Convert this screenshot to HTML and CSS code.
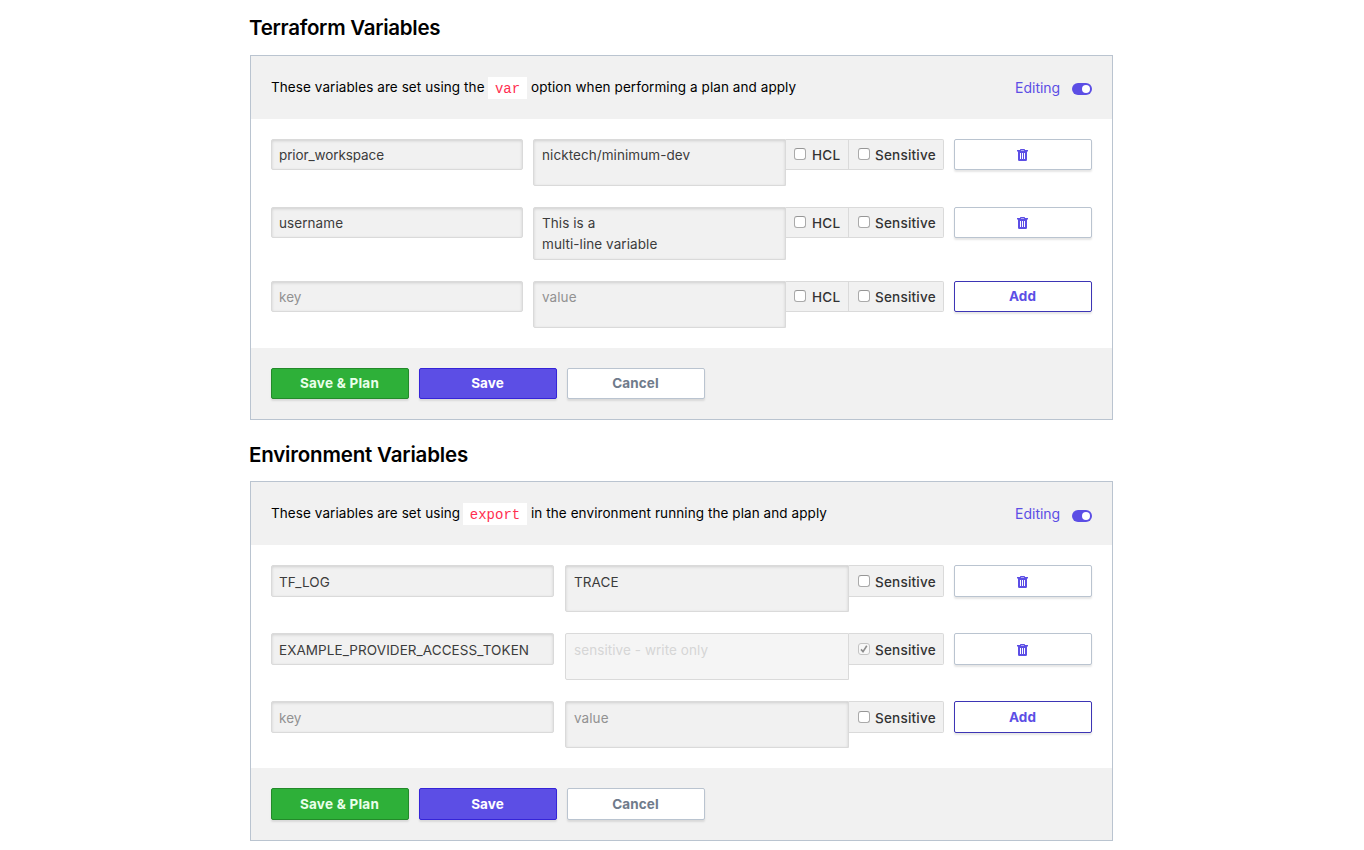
FILE: index.html
```
<!DOCTYPE html>
<html lang="en">
<head>
<meta charset="utf-8">
<title>Variables</title>
<link rel="stylesheet" href="styles.css">
</head>
<body>
<svg class="sprite" width="0" height="0" aria-hidden="true">
  <symbol id="trash" viewBox="0 0 11 12">
    <path fill="currentColor" fill-rule="evenodd" d="M3 1V.8Q3 0 3.8 0H7.2Q8 0 8 .8V1H11V2.5H10V10.8Q10 12 8.8 12H2.2Q1 12 1 10.8V2.5H0V1ZM4 1.5H7V.9H4ZM3 4V10H4V4ZM5 4V10H6V4ZM7 4V10H8V4Z"/>
  </symbol>
</svg>
<main class="page">
  <h2 class="title title-terraform">Terraform Variables</h2>
  <section class="panel">
    <header class="panel-head">
      <p class="intro"><span class="t-using-the">These variables are set using the</span><code class="code-var">var</code><span class="t-option">option when performing a plan and apply</span></p>
      <div class="mode"><span class="mode-label">Editing</span><span class="toggle"></span></div>
    </header>
    <div class="rows">
      <div class="row">
        <input class="field field-snake" type="text" value="prior_workspace">
        <textarea class="field area">nicktech/minimum-dev</textarea>
        <label class="option hcl"><input class="check" type="checkbox"><span>HCL</span></label>
        <label class="option sensitive"><input class="check" type="checkbox"><span>Sensitive</span></label>
        <button class="btn btn-plain"><svg class="icon"><use href="#trash"/></svg></button>
      </div>
      <div class="row">
        <input class="field" type="text" value="username">
        <textarea class="field area area-tall">This is a
multi-line variable</textarea>
        <label class="option hcl"><input class="check" type="checkbox"><span>HCL</span></label>
        <label class="option sensitive"><input class="check" type="checkbox"><span>Sensitive</span></label>
        <button class="btn btn-plain"><svg class="icon"><use href="#trash"/></svg></button>
      </div>
      <div class="row">
        <input class="field" type="text" placeholder="key">
        <textarea class="field area" placeholder="value"></textarea>
        <label class="option hcl"><input class="check" type="checkbox"><span>HCL</span></label>
        <label class="option sensitive"><input class="check" type="checkbox"><span>Sensitive</span></label>
        <button class="btn btn-add">Add</button>
      </div>
    </div>
    <footer class="panel-foot">
      <button class="btn btn-plan">Save &amp; Plan</button>
      <button class="btn btn-save">Save</button>
      <button class="btn btn-plain">Cancel</button>
    </footer>
  </section>

  <h2 class="title title-environment">Environment Variables</h2>
  <section class="panel panel-env">
    <header class="panel-head">
      <p class="intro"><span class="t-using">These variables are set using</span><code class="code-export">export</code><span class="t-env">in the environment running the plan and apply</span></p>
      <div class="mode"><span class="mode-label">Editing</span><span class="toggle"></span></div>
    </header>
    <div class="rows">
      <div class="row">
        <input class="field" type="text" value="TF_LOG">
        <textarea class="field area">TRACE</textarea>
        <label class="option sensitive"><input class="check" type="checkbox"><span>Sensitive</span></label>
        <button class="btn btn-plain"><svg class="icon"><use href="#trash"/></svg></button>
      </div>
      <div class="row">
        <input class="field" type="text" value="EXAMPLE_PROVIDER_ACCESS_TOKEN">
        <textarea class="field area area-off" placeholder="sensitive - write only" disabled></textarea>
        <label class="option sensitive"><span class="check check-on"><svg viewBox="0 0 12 12"><path d="M3 6.4L5 8.6L8.8 2.8" fill="none" stroke="#8d8d8d" stroke-width="1.6"/></svg></span><span>Sensitive</span></label>
        <button class="btn btn-plain"><svg class="icon"><use href="#trash"/></svg></button>
      </div>
      <div class="row">
        <input class="field" type="text" placeholder="key">
        <textarea class="field area" placeholder="value"></textarea>
        <label class="option sensitive"><input class="check" type="checkbox"><span>Sensitive</span></label>
        <button class="btn btn-add">Add</button>
      </div>
    </div>
    <footer class="panel-foot">
      <button class="btn btn-plan">Save &amp; Plan</button>
      <button class="btn btn-save">Save</button>
      <button class="btn btn-plain">Cancel</button>
    </footer>
  </section>
</main>
</body>
</html>
```
FILE: styles.css
```
* { box-sizing: border-box; }
body {
  margin: 0;
  background: #fff;
  color: #000;
  font: 13.5px/21px Inter, "Liberation Sans", sans-serif;
}
.sprite { display: block; }
.page { width: 863px; margin-left: 250px; }
.title {
  margin: 0 0 0 -1px;
  height: 55px;
  padding-top: 14px;
  font-size: 20.5px;
  line-height: 28px;
  font-weight: 600;
  letter-spacing: -0.28px;
  white-space: nowrap;
}
.title-environment { height: 61px; padding-top: 21px; letter-spacing: -0.18px; }
.panel { --control: 31px; border: 1px solid #bac4d0; }
.panel-env { --control: 32px; }
.panel-head {
  display: flex;
  justify-content: space-between;
  height: 63px;
  padding: 20px 20px 0;
  background: #f1f1f1;
}
.intro { display: flex; margin: 0; white-space: nowrap; line-height: 23px; letter-spacing: 0.08px; }
.intro code {
  height: 22px;
  margin: 1px 4px 0;
  background: #fff;
  color: #ff2e50;
  font: 14px/24px "Liberation Mono", monospace;
  letter-spacing: 0;
  text-align: center;
}
.code-var { width: 39px; }
.code-export { width: 64px; }
.t-using-the { width: 213px; }
.t-using { width: 188px; }
.mode { display: flex; gap: 12px; color: #5c4ee5; line-height: 24px; }
.mode-label { width: 45px; font-size: 14px; }
.toggle {
  display: flex;
  justify-content: flex-end;
  width: 20px;
  height: 12px;
  margin-top: 7px;
  padding: 2px;
  border-radius: 6px;
  background: #5c4ee5;
}
.toggle::after { content: ""; width: 8px; height: 8px; border-radius: 50%; background: #fff; }
.panel-env .toggle { margin-top: 8px; }
.rows { display: grid; gap: 21px; padding: 20px; }
.row {
  display: grid;
  grid-template-columns: 262px 253px 63px 105px 138px;
  align-items: start;
}
.panel-env .row { grid-template-columns: 294px 284px 105px 138px; }
.field {
  display: block;
  width: 252px;
  height: var(--control);
  margin: 0;
  padding: 0 7px;
  border: 1px solid #dadada;
  border-radius: 2px;
  background: #f1f1f1;
  box-shadow: inset 0 1px 3px rgba(0, 0, 0, .14);
  color: #3c3c3c;
  font: inherit;
  letter-spacing: 0.07px;
  resize: none;
  outline: none;
}
.field-snake { letter-spacing: -0.1px; }
.field::placeholder { color: #929292; }
.panel-env .field { width: 283px; padding-top: 1px; }
.row .area,
.panel-env .row .area {
  width: 100%;
  height: 47px;
  padding: 5px 8px;
  border-radius: 2px 0 0 2px;
  overflow: hidden;
}
.panel-env .row .area { padding-top: 6px; }
.row .area-tall { height: 53px; }
.row .area-off { background: #f5f5f5; box-shadow: none; }
.area-off::placeholder { color: #d6d6d6; }
.option {
  display: flex;
  height: var(--control);
  padding: 5px 0 0 8px;
  gap: 6px;
  border: 1px solid #dadada;
  border-left: 0;
  background: #f1f1f1;
  color: #333;
  font-weight: 500;
  letter-spacing: 0.22px;
}
.panel-env .option { padding-top: 6px; }
.sensitive { width: 95px; padding-left: 9px; gap: 5px; border-radius: 0 2px 2px 0; }
.check {
  appearance: none;
  flex: none;
  width: 12px;
  height: 12px;
  margin: 3px 0 0;
  border: 1px solid #aaa;
  border-top-color: #969696;
  border-radius: 3px;
  background: #fff;
}
.check-on { border-color: #c4c4c4; background: #f8f8f8; }
.check-on svg { display: block; width: 12px; height: 12px; margin: -1px; }
.btn {
  display: flex;
  align-items: center;
  justify-content: center;
  width: 138px;
  height: var(--control);
  padding: 0 1px 1px 0;
  border: 1px solid #bac4d0;
  border-radius: 2px;
  background: #fff;
  box-shadow: 0 2px 2px rgba(0, 0, 0, .1);
  color: #6f7b8b;
  font: 700 13.5px/21px Inter, "Liberation Sans", sans-serif;
  letter-spacing: 0.1px;
}
.panel-env .btn { padding-bottom: 0; }
.panel-env .icon { margin-top: 1px; }
.btn-add { border-color: #3d35b5; color: #5c4ee5; }
.btn-plan { border-color: #238a2a; background: #2eb039; color: #eaffeb; letter-spacing: 0.25px; }
.btn-save { border-color: #3524d8; background: #5c4ee5; color: #fff; }
.icon { width: 11px; height: 12px; margin-top: 2px; color: #5c4ee5; }
.panel-foot { display: flex; gap: 10px; padding: 20px; background: #f1f1f1; }
```
